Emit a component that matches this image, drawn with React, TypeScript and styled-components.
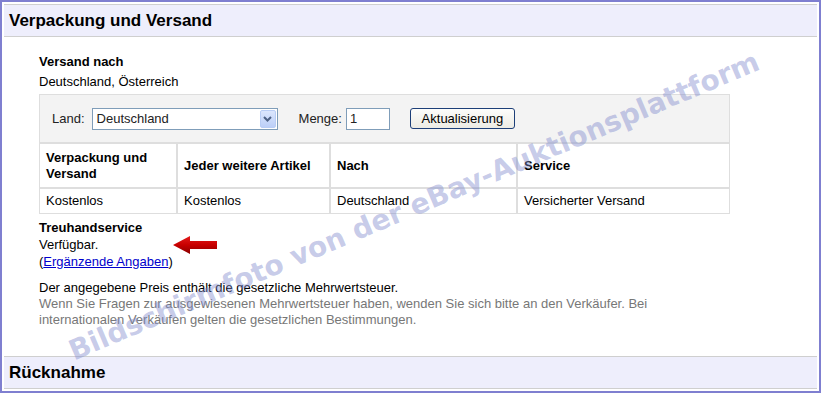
import React from 'react'
import styled, { createGlobalStyle } from 'styled-components'

const GlobalStyle = createGlobalStyle`
  html, body {
    margin: 0;
    padding: 0;
    background: #fff;
  }
  body {
    font-family: 'Liberation Sans', Arial, sans-serif;
    font-size: 13px;
    color: #000;
  }
`

const Frame = styled.div`
  position: relative;
  width: 821px;
  height: 393px;
  box-sizing: border-box;
  border: 2px solid #7f7fd0;
  padding: 2px;
  display: flex;
  flex-direction: column;
  overflow: hidden;
  background: #fff;
`

const SectionHead = styled.h2`
  margin: 0;
  flex: none;
  height: 33px;
  box-sizing: border-box;
  border-top: 1px solid #cfcfcf;
  border-bottom: 1px solid #cfcfcf;
  background: #eeeefc;
  padding-left: 5px;
  font-size: 17px;
  font-weight: bold;
  line-height: 32px;
  color: #000;
`

const Body = styled.div`
  flex: 1;
  padding: 15px 0 0 35px;
`

const Label = styled.div`
  font-weight: bold;
  line-height: 20px;
`

const Line = styled.div<{ $grey?: boolean }>`
  line-height: ${(p) => (p.$grey ? '16px' : '20px')};
  color: ${(p) => (p.$grey ? '#777' : '#000')};
`

const Table = styled.table`
  margin-top: 2px;
  border-collapse: separate;
  border-spacing: 0;
  width: 691px;
  table-layout: fixed;

  td,
  th {
    border: 1px solid #dedede;
    padding: 0 6px;
    text-align: left;
    vertical-align: middle;
    line-height: 16px;
  }

  th {
    height: 43px;
    font-weight: bold;
  }

  td {
    height: 24px;
  }
`

const FilterCell = styled.td`
  && {
    background: #f3f3f3;
    height: 47px;
    padding: 0 0 0 12px;
  }
`

const FilterRow = styled.div`
  display: flex;
  align-items: center;
  color: #222;
`

const Select = styled.div`
  margin-left: 7px;
  width: 186px;
  height: 22px;
  box-sizing: border-box;
  border: 1px solid #7f9db9;
  background: #fff;
  display: flex;
  align-items: center;
  justify-content: space-between;
  padding: 0 1px 0 4px;
`

const SelectArrow = styled.span`
  width: 16px;
  height: 18px;
  box-sizing: border-box;
  border: 1px solid #b9cdf5;
  border-radius: 2px;
  background: linear-gradient(#dbe6fd, #bccff8);
  display: flex;
  align-items: center;
  justify-content: center;
`

const Qty = styled.div`
  margin-left: 4px;
  width: 44px;
  height: 22px;
  box-sizing: border-box;
  border: 1px solid #7f9db9;
  background: #fff;
  padding: 0 3px;
  line-height: 20px;
`

const Button = styled.button`
  margin-left: 20px;
  width: 105px;
  height: 21px;
  border: 1px solid #1d3f78;
  border-radius: 3px;
  background: linear-gradient(#fdfdfb, #ecebe4);
  font-family: inherit;
  font-size: 13px;
  color: #000;
  padding: 0;
`

const Menge = styled.span`
  margin-left: 21px;
`

const Trust = styled.div`
  margin-top: 6px;
  line-height: 16px;
`

const TrustRow = styled.div`
  display: flex;
  align-items: center;
`

const Link = styled.a`
  color: #0000cc;
  text-decoration: underline;
`

const Vat = styled.div`
  margin-top: 10px;
  width: 691px;
  line-height: 16px;
`

const Watermark = styled.div`
  position: absolute;
  left: 412px;
  top: 204px;
  transform: translate(-50%, -50%) rotate(-23deg);
  white-space: nowrap;
  font-family: 'DejaVu Sans', Verdana, sans-serif;
  font-weight: bold;
  font-size: 28px;
  color: rgba(130, 140, 205, 0.45);
  pointer-events: none;
`

const Arrow = () => (
  <svg width="45" height="18" viewBox="0 0 45 18" style={{ marginLeft: 75 }}>
    <defs>
      <linearGradient id="ar" x1="0" y1="0" x2="0" y2="1">
        <stop offset="0" stopColor="#e41b1b" />
        <stop offset="0.5" stopColor="#c80000" />
        <stop offset="1" stopColor="#8a0000" />
      </linearGradient>
    </defs>
    <polygon points="0,9 17,0 17,5 44,5 44,13 17,13 17,18" fill="url(#ar)" />
  </svg>
)

const Chevron = () => (
  <svg width="9" height="6" viewBox="0 0 9 6">
    <path d="M1 1 L4.5 4.5 L8 1" stroke="#4d6185" strokeWidth="2" fill="none" />
  </svg>
)

export default function App() {
  return (
    <>
      <GlobalStyle />
      <Frame>
        <SectionHead>Verpackung und Versand</SectionHead>
        <Body>
          <Label>Versand nach</Label>
          <Line>Deutschland, Österreich</Line>
          <Table>
            <colgroup>
              <col style={{ width: 138 }} />
              <col style={{ width: 153 }} />
              <col style={{ width: 187 }} />
              <col style={{ width: 213 }} />
            </colgroup>
            <tbody>
              <tr>
                <FilterCell colSpan={4}>
                  <FilterRow>
                    <span>Land:</span>
                    <Select>
                      <span>Deutschland</span>
                      <SelectArrow>
                        <Chevron />
                      </SelectArrow>
                    </Select>
                    <Menge>Menge:</Menge>
                    <Qty>1</Qty>
                    <Button>Aktualisierung</Button>
                  </FilterRow>
                </FilterCell>
              </tr>
              <tr>
                <th>Verpackung und Versand</th>
                <th>Jeder weitere Artikel</th>
                <th>Nach</th>
                <th>Service</th>
              </tr>
              <tr>
                <td>Kostenlos</td>
                <td>Kostenlos</td>
                <td>Deutschland</td>
                <td>Versicherter Versand</td>
              </tr>
            </tbody>
          </Table>
          <Trust>
            <b>Treuhandservice</b>
            <TrustRow>
              <span>Verfügbar.</span>
              <Arrow />
            </TrustRow>
            <div>
              (<Link href="#">Ergänzende Angaben</Link>)
            </div>
          </Trust>
          <Vat>
            <div>Der angegebene Preis enthält die gesetzliche Mehrwertsteuer.</div>
            <Line $grey>
              Wenn Sie Fragen zur ausgewiesenen Mehrwertsteuer haben, wenden Sie sich bitte an den
              Verkäufer. Bei internationalen Verkäufen gelten die gesetzlichen Bestimmungen.
            </Line>
          </Vat>
        </Body>
        <SectionHead>Rücknahme</SectionHead>
        <Watermark>Bildschirmfoto von der eBay-Auktionsplattform</Watermark>
      </Frame>
    </>
  )
}
